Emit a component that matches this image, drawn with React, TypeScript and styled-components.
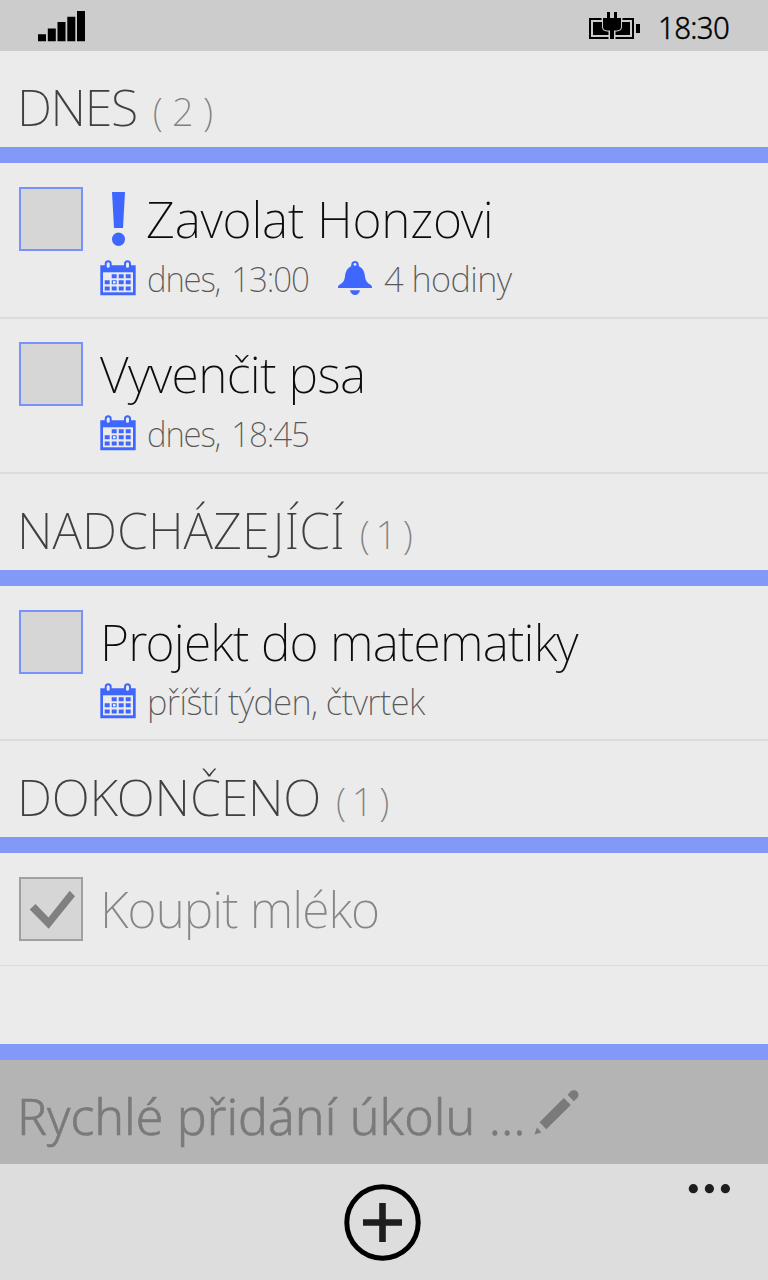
import React from "react";
import styled, { createGlobalStyle } from "styled-components";

const ACCENT = "#3f67ff";
const BAR = "#8399f8";

const GlobalStyle = createGlobalStyle`
  *, *::before, *::after { box-sizing: border-box; }
  body {
    margin: 0;
    background: #ebebeb;
    font-family: "Noto Sans", "Open Sans", sans-serif;
    font-weight: 200;
  }
  svg { display: block; flex: none; }
`;

const Screen = styled.div`
  display: flex;
  flex-direction: column;
  width: 768px;
  height: 1280px;
  overflow: hidden;
  background: #ebebeb;
`;

const StatusBar = styled.header`
  display: flex;
  justify-content: space-between;
  height: 51px;
  flex: none;
  padding: 0 38px;
  background: #ccc;
`;

const StatusRight = styled.div`
  display: flex;
`;

const Clock = styled.span`
  width: 72px;
  margin-left: 18px;
  font-size: 32px;
  font-weight: 300;
  line-height: 53px;
  letter-spacing: -0.7px;
  white-space: nowrap;
  color: #000;
  -webkit-text-stroke: 0.4px #000;
  transform: scaleX(0.92);
  transform-origin: left center;
`;

const List = styled.main`
  flex: 1;
  min-height: 0;
`;

const GroupHeader = styled.h2`
  display: flex;
  align-items: baseline;
  height: 96px;
  margin: 0;
  padding: 24px 17px 0;
  font-weight: 200;
  line-height: 64px;
  white-space: nowrap;
`;

const GroupName = styled.span<{ $tracking: number }>`
  font-size: 50px;
  letter-spacing: ${(p) => p.$tracking}px;
  color: #404040;
`;

const GroupCount = styled.span<{ $tracking: number; $gap: number }>`
  margin-left: ${(p) => p.$gap}px;
  font-size: 38px;
  letter-spacing: ${(p) => p.$tracking}px;
  color: #808080;
`;

const AccentBar = styled.div`
  height: 16px;
  flex: none;
  background: ${BAR};
`;

const TaskRow = styled.article<{ $height: number; $line: number; $top: number }>`
  display: flex;
  height: ${(p) => p.$height}px;
  padding: ${(p) => p.$top}px 19px 0;
  border-bottom: ${(p) => p.$line}px solid #dcdcdc;
`;

const Checkbox = styled.div<{ $done?: boolean }>`
  flex: none;
  width: 64px;
  height: 64px;
  margin-right: 17px;
  border: 2px solid ${(p) => (p.$done ? "#a0a0a0" : "#7892fb")};
  background: #d6d6d6;
`;

const TaskBody = styled.div`
  display: flex;
  flex-direction: column;
`;

const TitleLine = styled.div`
  display: flex;
  height: 62px;
`;

const Title = styled.span<{ $tracking: number; $done?: boolean }>`
  font-size: 50px;
  line-height: 64px;
  letter-spacing: ${(p) => p.$tracking}px;
  white-space: nowrap;
  color: ${(p) => (p.$done ? "#868686" : "#0c0c0c")};
`;

const DetailLine = styled.div`
  display: flex;
  margin-top: 4px;
`;

const Detail = styled.span<{ $tracking: number; $scale?: number; $width?: number; $wordGap?: number }>`
  width: ${(p) => (p.$width ? `${p.$width}px` : "auto")};
  margin-left: 11px;
  font-size: 34.5px;
  line-height: 51px;
  letter-spacing: ${(p) => p.$tracking}px;
  word-spacing: ${(p) => p.$wordGap ?? 0}px;
  white-space: nowrap;
  color: #585858;
  transform: scaleX(${(p) => p.$scale ?? 1});
  transform-origin: left center;
`;

const QuickAdd = styled.div`
  display: flex;
  height: 104px;
  flex: none;
  padding: 24px 17px 0;
  background: #b4b4b4;
`;

const QuickAddLabel = styled.span`
  width: 517px;
  font-size: 50px;
  font-weight: 300;
  line-height: 64px;
  word-spacing: 0.5px;
  white-space: nowrap;
  color: #7a7a7a;
  -webkit-text-stroke: 0.6px #7a7a7a;
`;

const AppBar = styled.footer`
  display: grid;
  grid-template-columns: 1fr 77px 1fr;
  height: 116px;
  flex: none;
  padding: 20px 38px 0 34px;
  background: #ddd;
`;

const AddButton = styled.div`
  grid-column: 2;
`;

const MoreButton = styled.div`
  justify-self: end;
`;

const MarkSlot = styled.div`
  padding: 5px 21px 0 12px;
`;

const CalendarSlot = styled.div`
  padding-top: 7px;
`;

const BellSlot = styled.div`
  padding: 8px 1px 0 0;
`;

const PencilSlot = styled.div`
  padding-top: 6px;
`;

function SignalIcon() {
  return (
    <svg width="47" height="51" viewBox="0 0 47 51">
      <path d="M0 34.3h8V41.3H0zM9.8 28.4h8V41.3h-8zM19.5 22h8V41.3h-8zM29.3 16.7h8V41.3h-8zM39 11h8V41.3h-8z" fill="#000" />
    </svg>
  );
}

function BatteryIcon() {
  return (
    <svg width="51" height="51" viewBox="0 0 51 51">
      <g fill="#000">
        <path d="M0 18h12.500v2H2v17h17.500v2H0zM45 18H33.500v2H43v17H26.500v2H45z" />
        <path d="M47 24h4v9h-4z" />
        <path d="M4 22h9v5.500q.5 3.500 5 4h1.500v3.500H4zM41 22h-8v5.500q-.5 3.500-5 4h-1.500v3.500H41z" />
        <path d="M18 12h3v6h4v-6h3v6h4v9q0 3-4 3.500h-3V39h-4v-8.500h-3q-4-.5-4-3.500v-9h4z" />
      </g>
    </svg>
  );
}

function ImportantIcon() {
  return (
    <svg width="13" height="54" viewBox="0 0 13 54" fill={ACCENT}>
      <path d="M0 0h13l-2 36H2z" />
      <ellipse cx="6.500" cy="47.300" rx="6.500" ry="6.700" />
    </svg>
  );
}

function CalendarIcon() {
  return (
    <svg width="36" height="36" viewBox="0 0 36 36">
      <path d="M0.300 5.300h35.400V35.300H.3z" fill={ACCENT} />
      <path d="M3 12.300h30V32.300H3z" fill="#ebebeb" />
      <g fill={ACCENT}>
        <path d="M11.700 14.300h5v4h-5zM18.700 14.300h5v4h-5zM25.700 14.300h5v4h-5z" />
        <path d="M4.700 20.300h5v4h-5zM11.700 20.300h5v4h-5zM18.700 20.300h5v4h-5zM25.700 20.300h5v4h-5z" />
        <path d="M4.700 26.400h5v4h-5zM11.700 26.400h5v4h-5zM18.700 26.400h5v4h-5zM25.700 26.400h5v4h-5z" />
      </g>
      <path d="M13 21.200h2.500v2.200H13z" fill="#fff" />
      <g fill="#ebebeb" stroke={ACCENT} strokeWidth="2">
        <rect x="5.700" y="1.300" width="5" height="7.500" rx="2.500" />
        <rect x="25" y="1.300" width="5" height="7.500" rx="2.500" />
      </g>
    </svg>
  );
}

function BellIcon() {
  return (
    <svg width="34" height="35" viewBox="0 0 34 35">
      <path
        d="M17 0C14.800 0 13.300 1.500 13.300 3.500C13.300 4.700 13.100 5.400 12 6C8.500 8 7.500 11.500 7 15.500C6.500 19.500 5 22 1.500 23.800C.3 24.500 0 25.400 0 27H34C34 25.400 33.700 24.500 32.500 23.800C29 22 27.500 19.500 27 15.500C26.500 11.500 25.500 8 22 6C20.900 5.400 20.700 4.700 20.700 3.500C20.700 1.500 19.200 0 17 0z"
        fill={ACCENT}
      />
      <circle cx="17" cy="3.400" r="1.400" fill="#ebebeb" />
      <path d="M12 29.300h10c-.6 3-2.600 4.700-5 4.700s-4.400-1.700-5-4.700z" fill={ACCENT} />
    </svg>
  );
}

function CheckIcon() {
  return (
    <svg width="60" height="60" viewBox="2 2 60 60">
      <path d="M10.700 32.500L16.500 27L29.500 40.500L50.700 13.700L56 19.200L29.700 51.700z" fill="#808080" />
    </svg>
  );
}

function PencilIcon() {
  return (
    <svg width="45" height="45" viewBox="0 0 45 45" fill="#7a7a7a">
      <path d="M.5 44.500L3 37.500L7.300 42.400z" />
      <path d="M5.500 32.300L29.800 8L36.800 15L12.300 39.300z" />
      <path d="M33.500 4.700L36.500 1.600C38.500-.4 41.500-.3 43.200 1.600C44.900 3.400 45 6 43.300 8L39.800 11.300z" />
    </svg>
  );
}

function AddIcon() {
  return (
    <svg width="77" height="77" viewBox="0 0 77 77">
      <circle cx="38.500" cy="38.500" r="35.700" fill="none" stroke="#000" strokeWidth="5" />
      <path d="M19 35.200h16.200V19h6.600v16.200H58v6.600H41.800V58h-6.600V41.800H19z" fill="#1e1e1e" />
    </svg>
  );
}

function MoreIcon() {
  return (
    <svg width="42" height="10" viewBox="0 0 42 10" fill="#1e1e1e">
      <circle cx="5.300" cy="4.700" r="4.600" />
      <circle cx="21.400" cy="4.700" r="4.600" />
      <circle cx="37.400" cy="4.700" r="4.600" />
    </svg>
  );
}

interface Task {
  title: string;
  tracking: number;
  height: number;
  top?: number;
  line?: number;
  done?: boolean;
  important?: boolean;
  due?: string;
  dueTracking?: number;
  dueScale?: number;
  dueWordGap?: number;
  reminder?: string;
}

interface Group {
  name: string;
  tracking: number;
  count: string;
  countTracking: number;
  gap: number;
  tasks: Task[];
}

const groups: Group[] = [
  {
    name: "DNES", tracking: -1.4, count: "( 2 )", countTracking: -0.3, gap: 16,
    tasks: [
      { title: "Zavolat Honzovi", tracking: -0.2, height: 156, important: true, due: "dnes, 13:00", dueTracking: -1.2, dueScale: 0.96, dueWordGap: 4, reminder: "4 hodiny" },
      { title: "Vyvenčit psa", tracking: -0.55, height: 155, top: 23, due: "dnes, 18:45", dueTracking: -1.2, dueScale: 0.96, dueWordGap: 4 },
    ],
  },
  {
    name: "NADCHÁZEJÍCÍ", tracking: 0, count: "( 1 )", countTracking: -2.1, gap: 15,
    tasks: [{ title: "Projekt do matematiky", tracking: -0.79, height: 155, due: "příští týden, čtvrtek", dueTracking: -0.55 }],
  },
  {
    name: "DOKONČENO", tracking: -0.2, count: "( 1 )", countTracking: -2.1, gap: 15,
    tasks: [{ title: "Koupit mléko", tracking: -0.95, height: 113, line: 1, done: true }],
  },
];

function TaskItem({ task }: { task: Task }) {
  return (
    <TaskRow $height={task.height} $line={task.line ?? 2} $top={task.top ?? 24}>
      <Checkbox $done={task.done}>{task.done && <CheckIcon />}</Checkbox>
      <TaskBody>
        <TitleLine>
          {task.important && <MarkSlot><ImportantIcon /></MarkSlot>}
          <Title $tracking={task.tracking} $done={task.done}>{task.title}</Title>
        </TitleLine>
        {task.due && (
          <DetailLine>
            <CalendarSlot><CalendarIcon /></CalendarSlot>
            <Detail
              $tracking={task.dueTracking ?? 0}
              $scale={task.dueScale}
              $wordGap={task.dueWordGap}
              $width={task.reminder ? 191 : undefined}
            >
              {task.due}
            </Detail>
            {task.reminder && (
              <>
                <BellSlot><BellIcon /></BellSlot>
                <Detail $tracking={-0.55}>{task.reminder}</Detail>
              </>
            )}
          </DetailLine>
        )}
      </TaskBody>
    </TaskRow>
  );
}

export default function App() {
  return (
    <>
      <GlobalStyle />
      <Screen>
        <StatusBar>
          <SignalIcon />
          <StatusRight>
            <BatteryIcon />
            <Clock>18:30</Clock>
          </StatusRight>
        </StatusBar>
        <List>
          {groups.map((group) => (
            <section key={group.name}>
              <GroupHeader>
                <GroupName $tracking={group.tracking}>{group.name}</GroupName>
                <GroupCount $tracking={group.countTracking} $gap={group.gap}>{group.count}</GroupCount>
              </GroupHeader>
              <AccentBar />
              {group.tasks.map((task) => <TaskItem key={task.title} task={task} />)}
            </section>
          ))}
        </List>
        <AccentBar />
        <QuickAdd>
          <QuickAddLabel>Rychlé přidání úkolu ...</QuickAddLabel>
          <PencilSlot><PencilIcon /></PencilSlot>
        </QuickAdd>
        <AppBar>
          <AddButton><AddIcon /></AddButton>
          <MoreButton><MoreIcon /></MoreButton>
        </AppBar>
      </Screen>
    </>
  );
}
